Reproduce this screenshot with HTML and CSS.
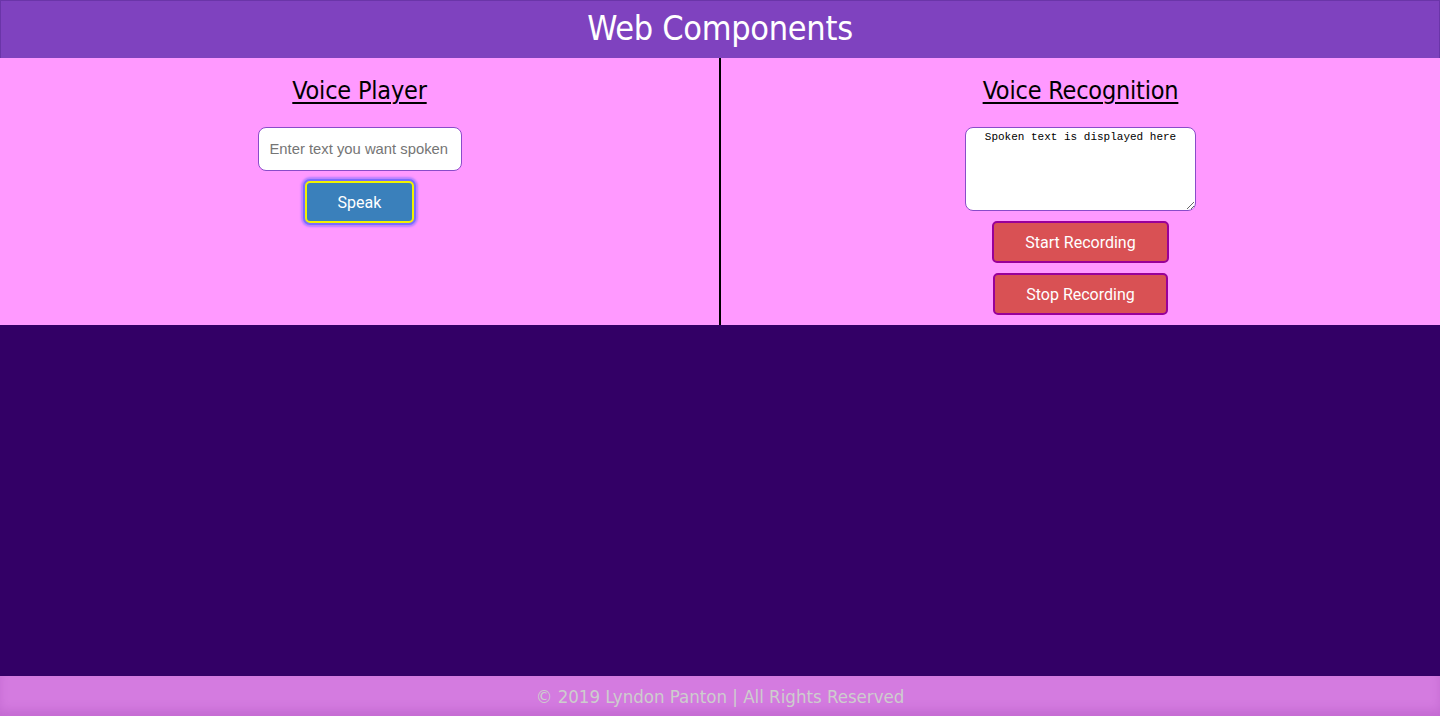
FILE: index.html
```html
<!DOCTYPE html>
<html>
<head>
<meta charset="utf-8">
<title>Web Components</title>
<link rel="stylesheet" href="styles.css">
</head>
<body>
<header class="site-header"><h1 class="site-title">Web Components</h1></header>
<main class="panels">
  <section class="panel panel-left">
    <h2 class="panel-title">Voice Player</h2>
    <input class="speak-input" type="text" placeholder="Enter text you want spoken">
    <button class="btn btn-speak">Speak</button>
  </section>
  <section class="panel panel-right">
    <h2 class="panel-title">Voice Recognition</h2>
    <textarea class="spoken-output">Spoken text is displayed here</textarea>
    <button class="btn btn-rec btn-start">Start Recording</button>
    <button class="btn btn-rec btn-stop">Stop Recording</button>
  </section>
</main>
<div class="filler"></div>
<footer class="site-footer">© 2019 Lyndon Panton | All Rights Reserved</footer>
</body>
</html>
```
FILE: styles.css
```css
html, body { margin: 0; padding: 0; height: 100%; }
body {
  display: flex;
  flex-direction: column;
  background: #330066;
  font-family: "DejaVu Sans Condensed", "DejaVu Sans", sans-serif;
  font-stretch: condensed;
}
.site-header {
  height: 58px;
  background: #7f42bf;
  display: flex;
  align-items: center;
  justify-content: center;
  box-sizing: border-box;
  border: 1px solid #6a35a8;
  border-bottom: none;
  padding-bottom: 4px;
}
.site-title {
  margin: 0;
  color: #fff;
  font-weight: normal;
  font-size: 34px;
  letter-spacing: -0.3px;
}
.panels {
  display: grid;
  grid-template-columns: 719px 2px 1fr;
  background: #ff99ff;
  height: 267px;
}
.panel {
  display: flex;
  flex-direction: column;
  align-items: center;
}
.panel-left { grid-column: 1; }
.panel-right { grid-column: 3; border-left: 2px solid #000; margin-left: -2px; }
.panel-title {
  margin: 17px 0 0;
  height: 33px;
  font-weight: normal;
  font-size: 25px;
  line-height: 32px;
  text-decoration: underline;
  text-decoration-thickness: 2px;
  text-underline-offset: 3px;
  color: #000;
  letter-spacing: -0.2px;
}
.speak-input {
  margin-top: 19px;
  width: 204px;
  height: 44px;
  box-sizing: border-box;
  border: 1px solid #8a4cc9;
  border-radius: 8px;
  background: #fff;
  padding: 0 11px;
  font-family: "Liberation Sans", sans-serif;
  font-stretch: normal;
  font-size: 14.8px;
  color: #333;
}
.speak-input::placeholder { color: #757575; }
.btn {
  font-family: "Roboto", "Liberation Sans", sans-serif;
  font-stretch: normal;
  font-size: 16px;
  color: #fff;
  cursor: pointer;
}
.btn-speak {
  margin-top: 10px;
  width: 109px;
  height: 42px;
  background: #3a80bb;
  border: 2px solid #f2f200;
  border-radius: 5px;
  box-shadow: 0 0 0 2px #7a6cff, 0 0 2px 4px rgba(122,108,255,0.55);
}
.spoken-output {
  margin-top: 19px;
  width: 231px;
  height: 84px;
  box-sizing: border-box;
  border: 1px solid #8a4cc9;
  border-radius: 8px;
  background: #fff;
  font-family: "Liberation Mono", monospace;
  font-size: 11px;
  text-align: center;
  padding: 3px 6px;
  color: #000;
  resize: vertical;
}
.btn-rec {
  height: 42px;
  background: #d95154;
  border: 2px solid #990099;
  border-radius: 5px;
}
.btn-start { margin-top: 10px; width: 177px; }
.btn-stop { margin-top: 10px; width: 175px; }
.filler { flex: 1; }
.site-footer {
  height: 40px;
  background: #d47be0;
  box-shadow: inset 0 -6px 10px rgba(150, 60, 170, 0.25);
  color: #cdcdcd;
  font-size: 18.5px;
  display: flex;
  align-items: center;
  justify-content: center;
}
```
